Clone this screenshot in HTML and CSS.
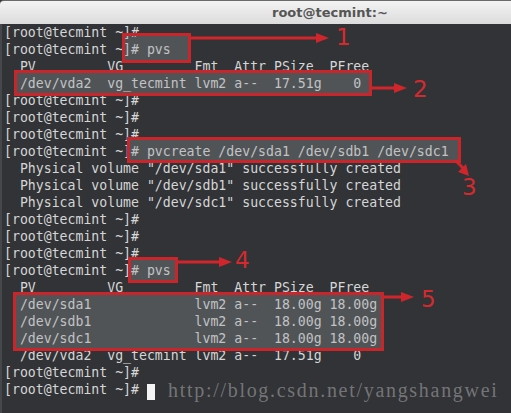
FILE: index.html
```html
<!DOCTYPE html>
<html>
<head>
<meta charset="utf-8">
<link rel="stylesheet" href="styles.css">
</head>
<body>
<div class="window">
  <div class="titlebar"><span class="title">root@tecmint:~</span></div>
  <div class="term">
<pre class="screen">[root@tecmint ~]#
[root@tecmint ~]# pvs
  PV         VG         Fmt  Attr PSize  PFree
  /dev/vda2  vg_tecmint lvm2 a--  17.51g    0
[root@tecmint ~]#
[root@tecmint ~]#
[root@tecmint ~]#
[root@tecmint ~]# pvcreate /dev/sda1 /dev/sdb1 /dev/sdc1
  Physical volume "/dev/sda1" successfully created
  Physical volume "/dev/sdb1" successfully created
  Physical volume "/dev/sdc1" successfully created
[root@tecmint ~]#
[root@tecmint ~]#
[root@tecmint ~]#
[root@tecmint ~]# pvs
  PV         VG         Fmt  Attr PSize  PFree
  /dev/sda1             lvm2 a--  18.00g 18.00g
  /dev/sdb1             lvm2 a--  18.00g 18.00g
  /dev/sdc1             lvm2 a--  18.00g 18.00g
  /dev/vda2  vg_tecmint lvm2 a--  17.51g    0
[root@tecmint ~]#
[root@tecmint ~]# <span class="cursor"> </span></pre>
  </div>
  <svg class="notes" width="511" height="413" viewBox="0 0 511 413">
    <g class="hl">
      <rect x="123.5" y="34.5" width="66" height="27"/>
      <rect x="15.5" y="71.5" width="355" height="23"/>
      <rect x="128.5" y="138.5" width="331" height="23"/>
      <rect x="129.5" y="258.5" width="47" height="23"/>
      <rect x="14.5" y="293.5" width="368" height="56"/>
    </g>
    <g class="arrow">
      <line x1="191" y1="38" x2="318" y2="38"/>
      <polygon points="316,33 329,38 316,43"/>
      <line x1="372" y1="88" x2="396" y2="88"/>
      <polygon points="394,83 407,88 394,93"/>
      <line x1="455" y1="160" x2="464" y2="169"/>
      <polygon points="458,172 469,176 466,164"/>
      <line x1="178" y1="262" x2="221" y2="262"/>
      <polygon points="219,257 232,262 219,267"/>
      <line x1="384" y1="297" x2="403" y2="297"/>
      <polygon points="401,292 414,297 401,302"/>
    </g>
    <g class="num">
      <text x="336" y="45">1</text>
      <text x="413" y="97">2</text>
      <text x="462" y="195">3</text>
      <text x="235" y="268">4</text>
      <text x="421" y="307">5</text>
    </g>
  </svg>
  <div class="watermark">http://blog.csdn.net/yangshangwei</div>
</div>
</body>
</html>
```
FILE: styles.css
```css
html, body {
  margin: 0;
  padding: 0;
  background: #313336;
}
.window {
  position: relative;
  width: 511px;
  height: 413px;
  overflow: hidden;
  display: flex;
  flex-direction: column;
  background: #313336;
}
.titlebar {
  height: 23px;
  border-top: 1px solid #6a6a6a;
  background: linear-gradient(#f3f3f3, #dcdcdc);
  display: flex;
  align-items: center;
  padding-left: 272px;
  box-sizing: content-box;
  border-top-left-radius: 4px;
}
.title {
  font-family: "DejaVu Sans", sans-serif;
  font-weight: bold;
  font-size: 13px;
  color: #555555;
}
.term {
  flex: 1;
  border-left: 2px solid #45474b;
  padding-left: 2px;
}
.screen {
  margin: 0;
  font-family: "DejaVu Sans Mono", monospace;
  font-size: 13.2px;
  line-height: 17px;
  color: #d6d6d6;
}
.cursor {
  display: inline-block;
  width: 8px;
  height: 16px;
  background: #f4f4f4;
  vertical-align: -3px;
}
.notes {
  position: absolute;
  left: 0;
  top: 0;
}
.hl rect {
  fill: rgba(150, 156, 160, 0.32);
  stroke: #c9262b;
  stroke-width: 3;
}
.arrow line {
  stroke: #d0262b;
  stroke-width: 3;
}
.arrow polygon {
  fill: #d0262b;
}
.num text {
  font-family: "DejaVu Sans", sans-serif;
  font-size: 23px;
  fill: #d42a2e;
}
.watermark {
  position: absolute;
  left: 168px;
  top: 379px;
  font-family: "Liberation Serif", serif;
  font-size: 20px;
  letter-spacing: 1.7px;
  color: rgba(175, 175, 175, 0.55);
}
```
